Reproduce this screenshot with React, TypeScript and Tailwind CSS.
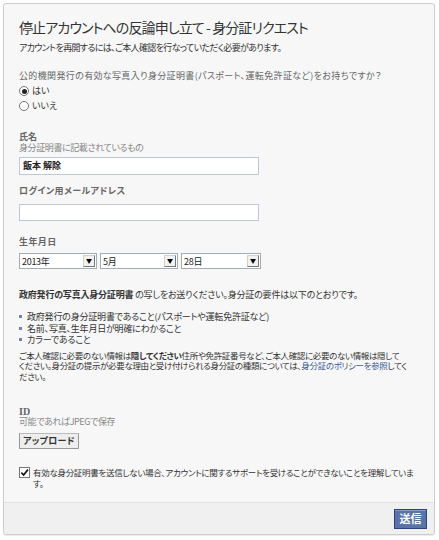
import React from "react";

const jp = "font-['Noto_Sans_CJK_JP','Noto_Sans',sans-serif] [font-feature-settings:'palt']";

const Select = ({ value, width }: { value: string; width: string }) => (
    <div className={`flex items-center h-[16px] bg-white border border-[#a5acb2] ${width}`}>
        <span className="flex-1 pl-[2px] text-[9px] leading-none text-[#222] tracking-[-0.3px]">{value}</span>
        <span className="flex items-center justify-center w-[12px] h-[12px] mr-[1px] bg-[#f2f2f2] border border-[#d0d0d0] border-r-[#777] border-b-[#777] text-[6px] leading-none text-black">▼</span>
    </div>
);

const App = () => {
    return (
        <div className={`w-[439px] h-[540px] bg-white p-[3px] ${jp}`}>
            <div className="w-[432px] h-[532px] flex flex-col bg-[#f7f7f7] border border-[#cdcdcd] rounded-[3px] shadow-[0_1px_1px_rgba(0,0,0,0.08)]">
                <div className="flex-1 px-[15px] pt-[14px]">
                    <h1 className="text-[14px] leading-[18px] text-[#333] tracking-[-0.9px]">停止アカウントへの反論申し立て - 身分証リクエスト</h1>
                    <p className="mt-[6px] text-[9px] leading-[12px] text-[#333] tracking-[-0.65px]">アカウントを再開するには、ご本人確認を行なっていただく必要があります。</p>

                    <p className="mt-[16px] whitespace-nowrap text-[9px] leading-[12px] text-[#666] tracking-[0.35px]">公的機関発行の有効な写真入り身分証明書(パスポート、運転免許証など)をお持ちですか？</p>
                    <div className="mt-[3px] flex flex-col gap-[3px]">
                        <label className="flex items-center gap-[3px] text-[9px] leading-[12px] text-[#333]">
                            <span className="flex items-center justify-center w-[10px] h-[10px] rounded-full border border-[#777] bg-white">
                                <span className="w-[5px] h-[5px] rounded-full bg-[#222]" />
                            </span>
                            はい
                        </label>
                        <label className="flex items-center gap-[3px] text-[9px] leading-[12px] text-[#333]">
                            <span className="w-[10px] h-[10px] rounded-full border border-[#777] bg-white" />
                            いいえ
                        </label>
                    </div>

                    <p className="mt-[20px] text-[9px] leading-[10px] text-[#666] font-bold">氏名</p>
                    <p className="mt-[1px] text-[9px] leading-[10px] text-[#888] tracking-[-0.4px]">身分証明書に記載されているもの</p>
                    <div className="mt-[4px] w-[240px] h-[18px] flex items-center px-[3px] bg-white border border-[#bdc7d8] text-[9px] font-bold text-[#222]">飯本 解除</div>

                    <p className="mt-[10px] text-[9px] leading-[12px] text-[#666] font-bold tracking-[0.4px]">ログイン用メールアドレス</p>
                    <div className="mt-[7px] w-[240px] h-[17px] bg-white border border-[#bdc7d8]" />

                    <p className="mt-[15px] text-[9px] leading-[12px] text-[#666] font-bold tracking-[0.4px]">生年月日</p>
                    <div className="mt-[5px] flex gap-[3px]">
                        <Select value="2013年" width="w-[78px]" />
                        <Select value="5月" width="w-[78px]" />
                        <Select value="28日" width="w-[80px]" />
                    </div>

                    <p className="mt-[20px] whitespace-nowrap text-[9px] leading-[12px] text-[#333] tracking-[-0.2px]">
                        <span className="font-bold">政府発行の写真入身分証明書</span> の写しをお送りください。身分証の要件は以下のとおりです。
                    </p>
                    <ul className="mt-[10px] flex flex-col text-[9px] leading-[11.5px] text-[#333] tracking-[-0.2px]">
                        <li className="flex items-center gap-[5px]"><span className="w-[3px] h-[3px] bg-[#6d84b4]" />政府発行の身分証明書であること(パスポートや運転免許証など)</li>
                        <li className="flex items-center gap-[5px]"><span className="w-[3px] h-[3px] bg-[#6d84b4]" />名前、写真、生年月日が明確にわかること</li>
                        <li className="flex items-center gap-[5px]"><span className="w-[3px] h-[3px] bg-[#6d84b4]" />カラーであること</li>
                    </ul>
                    <p className="mt-[4px] whitespace-nowrap text-[8.5px] leading-[10.5px] text-[#333] tracking-[-0.35px]">
                        ご本人確認に必要のない情報は<span className="font-bold">隠してください</span>住所や免許証番号など、ご本人確認に必要のない情報は隠して<br />
                        ください。身分証の提示が必要な理由と受け付けられる身分証の種類については、<span className="text-[#3b5998]">身分証のポリシーを参照</span>してく<br />
                        ださい。
                    </p>

                    <p className="mt-[26px] text-[10px] leading-[10px] text-[#666] font-bold font-['Liberation_Serif',serif]">ID</p>
                    <p className="text-[9px] leading-[10px] text-[#888] tracking-[-0.4px]">可能であればJPEGで保存</p>
                    <button className="mt-[6px] h-[16px] w-[60px] flex items-center justify-center whitespace-nowrap bg-[#eeeeee] border border-[#999] border-t-[#bbb] text-[9px] font-bold text-[#333] tracking-[0.3px]">アップロード</button>

                    <label className="mt-[18px] flex items-start gap-[3px] text-[8.5px] leading-[11px] text-[#333]">
                        <span className="shrink-0 flex items-center justify-center w-[11px] h-[11px] bg-white border border-[#777]">
                            <svg viewBox="0 0 10 10" className="w-[9px] h-[9px]"><path d="M1.5 5.2 L4 7.8 L8.8 1.8" fill="none" stroke="#111" strokeWidth="1.8" /></svg>
                        </span>
                        <span className="whitespace-nowrap tracking-[-0.3px]">有効な身分証明書を送信しない場合、アカウントに関するサポートを受けることができないことを理解していま<br />す。</span>
                    </label>
                </div>
                <div className="h-[32px] flex items-center justify-end pr-[7px] bg-[#f0f0f0] border-t border-[#e2e2e2] rounded-b-[3px]">
                    <button className="h-[20px] w-[33px] flex items-center justify-center bg-[#5b74a8] border border-[#29447e] text-[11px] font-bold text-white shadow-[inset_0_1px_0_#8a9cc2]">送信</button>
                </div>
            </div>
        </div>
    );
};

export default App;
